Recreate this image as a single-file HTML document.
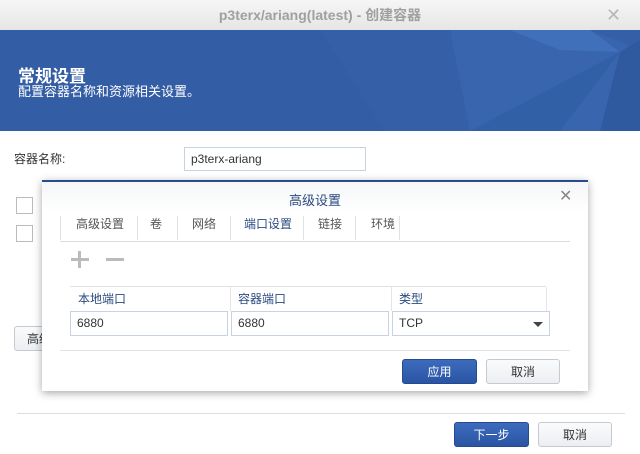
<!DOCTYPE html>
<html><head><meta charset="utf-8"><style>
*{box-sizing:border-box;margin:0;padding:0}
body{width:640px;height:454px;overflow:hidden;background:#fff;font-family:"Liberation Sans","Noto Sans CJK SC",sans-serif;position:relative;font-size:12px;color:#333}
.abs{position:absolute}
.btn{position:absolute;height:25px;border-radius:3px;text-align:center;line-height:24px;font-size:12px}
.bb{background:linear-gradient(#3d6bbd,#2a55a3);border:1px solid #244a90;color:#fff}
.bg{background:linear-gradient(#fafbfc,#eceef1);border:1px solid #c5cad2;color:#333}
.inp{position:absolute;border:1px solid #c7d3e0;background:#fff;height:25px;line-height:23px;padding-left:6px;font-size:12px;color:#333}
</style></head><body>
<div class="abs" style="left:0;top:0;width:640px;height:30px;background:linear-gradient(#f6f6f6,#e6e6e6);text-align:center;line-height:30px;font-size:14px;font-weight:bold;color:#a0a0a0">p3terx/ariang(latest) - 创建容器</div>
<div class="abs" style="left:606px;top:5px;font-size:18px;color:#b8b8b8">✕</div>
<svg class="abs" style="left:0;top:30px" width="640" height="101">
<rect width="640" height="101" fill="#335da5"/>
<polygon points="320,0 640,0 640,101 385,101" fill="#3560a8"/>
<polygon points="450,0 590,0 640,20 640,101 470,101" fill="#3865ae"/>
<polygon points="510,0 590,0 620,22 560,20" fill="#3f70b9"/>
<polygon points="620,22 640,10 640,101 600,101" fill="#305aa0"/>
<polygon points="620,22 470,101 560,101" fill="#3260a6"/>
</svg>
<div class="abs" style="left:18px;top:62px;font-size:17px;font-weight:bold;color:#fff">常规设置</div>
<div class="abs" style="left:18px;top:81px;font-size:13px;color:#fff">配置容器名称和资源相关设置。</div>
<div class="abs" style="left:14px;top:150px;font-size:12px">容器名称:</div>
<div class="inp" style="left:184px;top:147px;width:182px;height:24px">p3terx-ariang</div>
<div class="abs" style="left:16px;top:197px;width:17px;height:17px;border:1px solid #bbb"></div>
<div class="abs" style="left:16px;top:225px;width:17px;height:17px;border:1px solid #bbb"></div>
<div class="btn bg" style="left:14px;top:326px;width:60px;text-align:left;padding-left:12px">高级</div>
<div class="abs" style="left:17px;top:413px;width:608px;height:1px;background:#ddd"></div>
<div class="btn bb" style="left:454px;top:422px;width:75px">下一步</div>
<div class="btn bg" style="left:538px;top:422px;width:74px">取消</div>

<div class="abs" style="left:42px;top:180px;width:546px;height:211px;background:#fff;border-top:2px solid #2b4c8c;box-shadow:0 2px 8px rgba(0,0,0,.35)">
<div class="abs" style="left:0;top:0;width:546px;height:30px;background:linear-gradient(#f5f6f8,#fff)"></div>
<div class="abs" style="left:0;top:8px;width:546px;text-align:center;font-size:13px;color:#2a4a80">高级设置</div>
<div class="abs" style="left:517px;top:4px;font-size:16px;color:#888">✕</div>
<div class="abs" style="left:18px;top:59px;width:510px;height:1px;background:#ddd"></div>
<div class="abs" style="top:34px;left:18px;height:24px;width:1px;background:#e2e2e2"></div>
<div class="abs" style="top:34px;left:95px;height:24px;width:1px;background:#e2e2e2"></div>
<div class="abs" style="top:34px;left:135px;height:24px;width:1px;background:#e2e2e2"></div>
<div class="abs" style="top:34px;left:188px;height:24px;width:1px;background:#e2e2e2"></div>
<div class="abs" style="top:34px;left:261px;height:24px;width:1px;background:#e2e2e2"></div>
<div class="abs" style="top:34px;left:313px;height:24px;width:1px;background:#e2e2e2"></div>
<div class="abs" style="top:34px;left:357px;height:24px;width:1px;background:#e2e2e2"></div>
<div class="abs" style="top:33px;left:34px;color:#555">高级设置</div>
<div class="abs" style="top:33px;left:108px;color:#555">卷</div>
<div class="abs" style="top:33px;left:150px;color:#555">网络</div>
<div class="abs" style="top:33px;left:202px;color:#2a4a80">端口设置</div>
<div class="abs" style="top:33px;left:276px;color:#555">链接</div>
<div class="abs" style="top:33px;left:329px;color:#555">环境</div>
<div class="abs" style="top:76px;left:29px;width:18px;height:3px;background:#bbb"></div>
<div class="abs" style="top:69px;left:36px;width:3px;height:17px;background:#bbb"></div>
<div class="abs" style="top:76px;left:64px;width:18px;height:3px;background:#bbb"></div>
<div class="abs" style="left:28px;top:104px;width:476px;height:1px;background:#e2e2e2"></div>
<div class="abs" style="left:188px;top:105px;width:1px;height:24px;background:#e5e5e5"></div>
<div class="abs" style="left:349px;top:105px;width:1px;height:24px;background:#e5e5e5"></div>
<div class="abs" style="left:504px;top:105px;width:1px;height:24px;background:#e5e5e5"></div>
<div class="abs" style="left:36px;top:108px;color:#2a4a80">本地端口</div>
<div class="abs" style="left:196px;top:108px;color:#2a4a80">容器端口</div>
<div class="abs" style="left:357px;top:108px;color:#2a4a80">类型</div>
<div class="inp" style="left:28px;top:129px;width:158px">6880</div>
<div class="inp" style="left:189px;top:129px;width:158px">6880</div>
<div class="inp" style="left:350px;top:129px;width:158px">TCP</div>
<div class="abs" style="left:491px;top:140px;width:0;height:0;border-left:5px solid transparent;border-right:5px solid transparent;border-top:5px solid #444"></div>
<div class="abs" style="left:18px;top:168px;width:510px;height:1px;background:#e2e2e2"></div>
<div class="btn bb" style="left:360px;top:177px;width:75px">应用</div>
<div class="btn bg" style="left:444px;top:177px;width:74px">取消</div>
</div>
</body></html>
